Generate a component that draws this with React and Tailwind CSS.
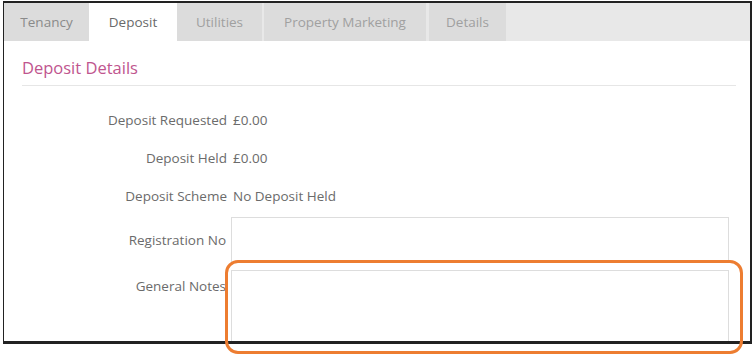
export default function App() {
  const font = { fontFamily: '"Open Sans", "Noto Sans", sans-serif' };
  return (
    <div className="relative w-[754px] h-[361px] bg-white overflow-hidden" style={font}>
      <div className="ml-[3px] mt-[1px] w-[749px] h-[343px] border-l border-t-2 border-r-2 border-b-[3px] border-[#222] overflow-hidden flex flex-col">
        {/* tab bar */}
        <div className="flex h-[38px] bg-[#e8e8e8] text-[13.5px] shrink-0">
          <div className="w-[85px] bg-[#dcdcdc] flex items-center justify-center text-[#8a8a8a]">Tenancy</div>
          <div className="w-[88px] bg-white flex items-center justify-center text-[#6a6a6a]">Deposit</div>
          <div className="w-[85px] bg-[#dcdcdc] flex items-center justify-center text-[#a0a0a0]">Utilities</div>
          <div className="w-[2px]" />
          <div className="w-[162px] bg-[#dcdcdc] flex items-center justify-center text-[#a0a0a0]">Property Marketing</div>
          <div className="w-[3px]" />
          <div className="w-[77px] bg-[#dcdcdc] flex items-center justify-center text-[#a0a0a0]">Details</div>
        </div>
        {/* content */}
        <div className="pl-[18px] pr-[14px]">
          <div className="h-[45px] flex items-center pt-[10px] border-b border-[#e6e6e6] text-[16.5px] text-[#c0558e]">Deposit Details</div>
        </div>
        <div className="flex flex-col text-[13.5px] text-[#6b6b6b] pt-[15px]">
          <div className="flex items-center h-[38px]">
            <div className="w-[229px] text-right pr-[6px]">Deposit Requested</div>
            <div>£0.00</div>
          </div>
          <div className="flex items-center h-[38px]">
            <div className="w-[229px] text-right pr-[6px]">Deposit Held</div>
            <div>£0.00</div>
          </div>
          <div className="flex items-center h-[38px]">
            <div className="w-[229px] text-right pr-[6px]">Deposit Scheme</div>
            <div>No Deposit Held</div>
          </div>
          <div className="flex items-center h-[46px] mt-[2px]">
            <div className="w-[227px] text-right pr-[5px]">Registration No</div>
            <div className="w-[498px] h-[46px] border border-[#dddddd] bg-white" />
          </div>
          <div className="flex items-start mt-[7px]">
            <div className="w-[227px] text-right pr-[5px] pt-[6px]">General Notes</div>
            <div className="w-[498px] h-[100px] border border-[#dddddd] bg-white" />
          </div>
        </div>
      </div>
      {/* annotation */}
      <div className="absolute left-[225px] top-[260px] w-[518px] h-[94px] border-[3px] border-[#ed7d31] rounded-[13px]" />
    </div>
  );
}
